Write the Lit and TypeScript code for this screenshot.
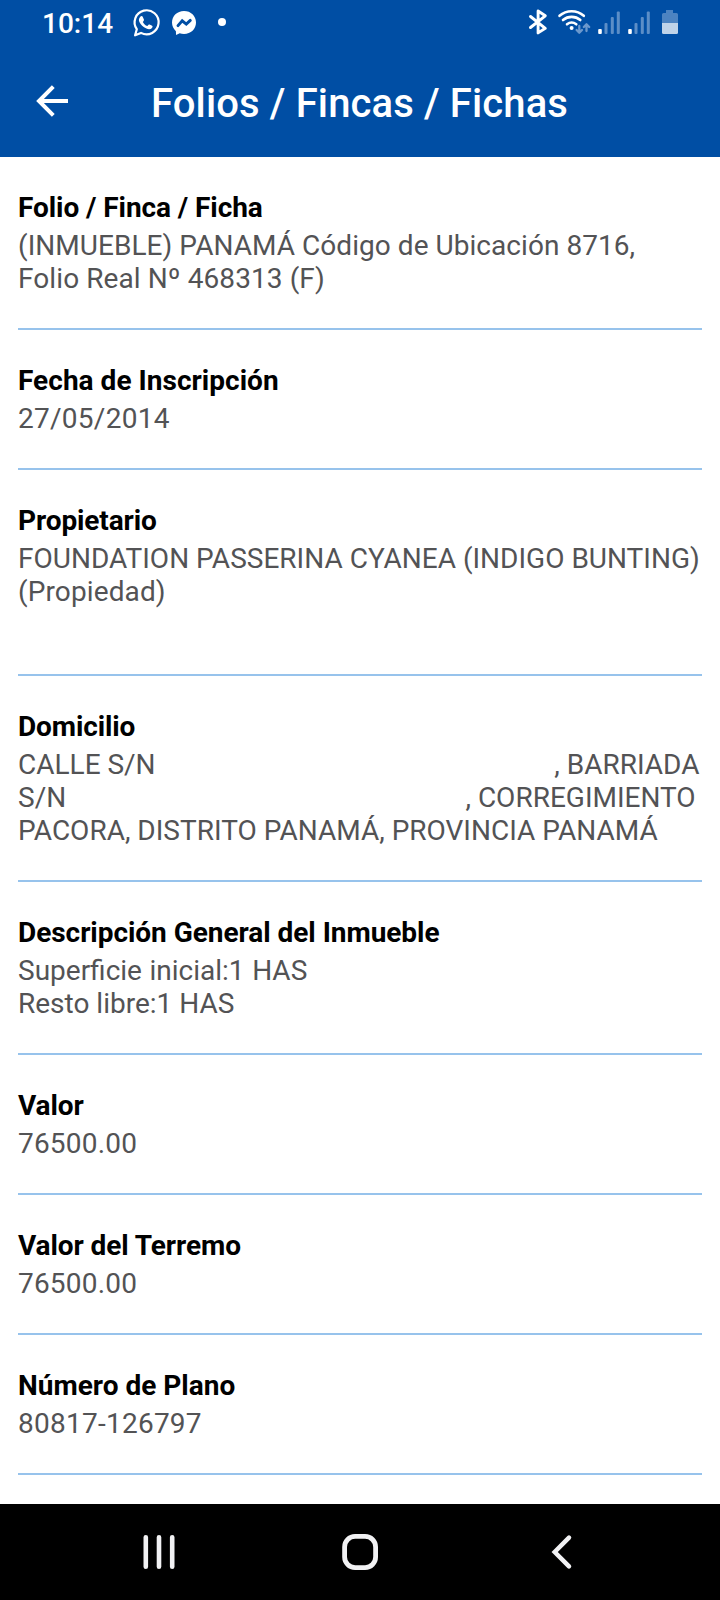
import { LitElement, html, css, svg } from "lit";
import { customElement } from "lit/decorators.js";
import { styleMap } from "lit/directives/style-map.js";

// A run of text and its letter and word spacing in pixels.
interface Run {
  text: string;
  track?: number;
  word?: number;
}

interface Field {
  label: Run;
  lines: Run[];
}

const gap = " ".repeat(58);

const fields: Field[] = [
  {
    label: { text: "Folio / Finca / Ficha", track: -0.07 },
    lines: [
      { text: "(INMUEBLE) PANAMÁ Código de Ubicación 8716,", track: 0.045 },
      { text: "Folio Real Nº 468313 (F)", track: 0.09 },
    ],
  },
  { label: { text: "Fecha de Inscripción", track: 0.03 }, lines: [{ text: "27/05/2014", track: 0.27 }] },
  {
    label: { text: "Propietario", track: -0.1 },
    lines: [{ text: "FOUNDATION PASSERINA CYANEA (INDIGO BUNTING)", track: 0.01 }, { text: "(Propiedad)", track: 0.12 }, { text: "" }],
  },
  {
    label: { text: "Domicilio", track: -0.12 },
    lines: [
      { text: "CALLE S/N" + gap + ", BARRIADA", word: -0.07 },
      { text: "S/N" + gap + ", CORREGIMIENTO", word: -0.06 },
      { text: "PACORA, DISTRITO PANAMÁ, PROVINCIA PANAMÁ" },
    ],
  },
  {
    label: { text: "Descripción General del Inmueble", track: -0.04 },
    lines: [{ text: "Superficie inicial:1 HAS", word: 0.6 }, { text: "Resto libre:1 HAS" }],
  },
  { label: { text: "Valor", track: -0.1 }, lines: [{ text: "76500.00", track: 0.2 }] },
  { label: { text: "Valor del Terremo", track: -0.08 }, lines: [{ text: "76500.00", track: 0.2 }] },
  { label: { text: "Número de Plano" }, lines: [{ text: "80817-126797", track: 0.25 }] },
];

const spacing = (r: Run) =>
  styleMap({
    ...(r.track ? { letterSpacing: `${r.track}px` } : {}),
    ...(r.word ? { wordSpacing: `${r.word}px` } : {}),
  });

// Four ascending bars, only the first one lit.
const signal = (x: number) => svg`
  <g transform="translate(${x} 0)">
    <rect x="0" y="29" width="3.6" height="5" rx="1" fill="#fff"/>
    <g fill="#5c8ec7">
      <rect x="6.3" y="23" width="3" height="11" rx="1"/>
      <rect x="12.6" y="17" width="3" height="17" rx="1"/>
      <rect x="18.6" y="11.6" width="3" height="22.4" rx="1"/>
    </g>
  </g>`;

@customElement("app-root")
export class AppRoot extends LitElement {
  static styles = css`
    :host {
      display: flex;
      flex-direction: column;
      width: 720px;
      height: 1600px;
      overflow: hidden;
      background: #fff;
      font-family: Roboto, sans-serif;
    }
    svg { display: block; flex: none; }
    .status {
      height: 48px;
      flex: none;
      display: flex;
      justify-content: space-between;
      background: #004ea4;
      color: #fff;
    }
    .left { display: flex; padding-left: 42px; }
    .time {
      width: 88px;
      padding-top: 7px;
      font-size: 28px;
      line-height: 33px;
      font-weight: 500;
      white-space: nowrap;
    }
    .bar {
      height: 109px;
      flex: none;
      display: flex;
      background: #004ea4;
      color: #fff;
    }
    .title {
      margin: 0 0 0 42px;
      padding-top: 32px;
      font-size: 40px;
      line-height: 47px;
      font-weight: 500;
      letter-spacing: 0.13px;
      white-space: nowrap;
    }
    .list {
      flex: 1;
      min-height: 0;
      padding: 0 18px;
      overflow: hidden;
    }
    .field {
      display: flex;
      flex-direction: column;
      gap: 5px;
      padding: 34px 0 33px;
      border-bottom: 2px solid #97c3ec;
      font-size: 28px;
      line-height: 33px;
      white-space: pre;
      font-variant-ligatures: common-ligatures;
    }
    .label { color: #000; font-weight: 700; }
    .value { color: #535355; }
    .line { height: 33px; }
    .nav {
      height: 96px;
      flex: none;
      background: #000;
    }
  `;

  render() {
    return html`
      <header class="status">
        <div class="left">
          <span class="time">10:14</span>
          <svg width="110" height="48" viewBox="130 0 110 48" fill="none">
            <path d="M135.100 35.300L136.800 29.200A12 12 0 1 1 141 32.900z" stroke="#fff" stroke-width="2.200" stroke-linejoin="round"/>
            <path d="M140.300 16.800c.6-.8 1.900-1 2.400 0l1.200 2.700c.3.800-.1 1.300-1.100 2.400 1 2 2.500 3.300 4.500 4.100 1-1.100 1.500-1.900 2.300-1.500l2.500 1.300c.8.4.5 1.500-.1 2.200-1.400 1.400-3.400 1.500-5.600.6-3.400-1.300-5.600-3.700-7-6.500-.9-2-.5-3.900.9-5.300z" fill="#fff"/>
            <path d="M184 11c-6.900 0-12 5-12 11.600 0 3.500 1.500 6.500 3.900 8.600l.2 3.700 3.600-1.600c1.300.4 2.700.6 4.300.6 6.900 0 12-5 12-11.500S190.900 11 184 11z" fill="#fff"/>
            <path d="M178 25.600l4.200-4.800 4.100 3.300 4-3.700" stroke="#004ea4" stroke-width="2.900" stroke-linejoin="miter" stroke-linecap="round"/>
            <circle cx="222" cy="22" r="4" fill="#fff"/>
          </svg>
        </div>
        <svg width="220" height="48" viewBox="500 0 220 48" fill="none">
          <path d="M530.500 16.500l14.800 11.800-7.200 4.600V11l7.200 4.800-14.800 11.700" stroke="#fff" stroke-width="2.900" stroke-linejoin="round" stroke-linecap="round"/>
          <g stroke="#fff" stroke-width="2.600" stroke-linecap="round">
            <path d="M559.500 15.800a18.500 18.500 0 0 1 24.300 0"/>
            <path d="M563 20a13.500 13.500 0 0 1 17.300 0"/>
            <path d="M567 24.300a7.600 7.600 0 0 1 9.300 0"/>
          </g>
          <circle cx="571.600" cy="28" r="2" fill="#fff"/>
          <g stroke="#6b98cd" stroke-width="2.300" stroke-linecap="round" stroke-linejoin="round">
            <path d="M579.300 26v6.500M576.600 30l2.700 2.700 2.700-2.700"/>
            <path d="M586.500 31v-6.500M583.800 27l2.700-2.700 2.700 2.700"/>
          </g>
          ${signal(598.2)}
          ${signal(628.2)}
          <path d="M666 10h7v3h3.500a1.500 1.500 0 0 1 1.500 1.500V23h-16v-8.500a1.500 1.500 0 0 1 1.500-1.500h2.500z" fill="#4c83c1"/>
          <path d="M662 23h16v9.500a1.500 1.500 0 0 1-1.500 1.500h-13a1.500 1.500 0 0 1-1.500-1.500z" fill="#bfd3e9"/>
        </svg>
      </header>
      <header class="bar">
        <svg width="109" height="109" viewBox="0 48 109 109" fill="none" stroke="#fff" stroke-width="4">
          <path d="M68 101H39"/>
          <path d="M53.300 86.700L39 101l14.300 14.300"/>
        </svg>
        <h1 class="title">Folios / Fincas / Fichas</h1>
      </header>
      <main class="list">
        ${fields.map(
          (f) => html`<section class="field"><div class="label" style=${spacing(f.label)}>${f.label.text}</div><div class="value">${f.lines.map(
            (l) => html`<div class="line" style=${spacing(l)}>${l.text}</div>`
          )}</div></section>`
        )}
      </main>
      <nav class="nav">
        <svg width="720" height="96" viewBox="0 1504 720 96" fill="none" stroke="#f2f2f4">
          <path d="M145.800 1537.300v29.400M159 1537.300v29.400M172.200 1537.300v29.400" stroke-width="4.600" stroke-linecap="round"/>
          <rect x="344.600" y="1536.400" width="31" height="31.200" rx="10.500" stroke-width="4.800"/>
          <path d="M569 1537.600L554.700 1552l14.300 14.400" stroke-width="4.500" stroke-linecap="round"/>
        </svg>
      </nav>
    `;
  }
}
